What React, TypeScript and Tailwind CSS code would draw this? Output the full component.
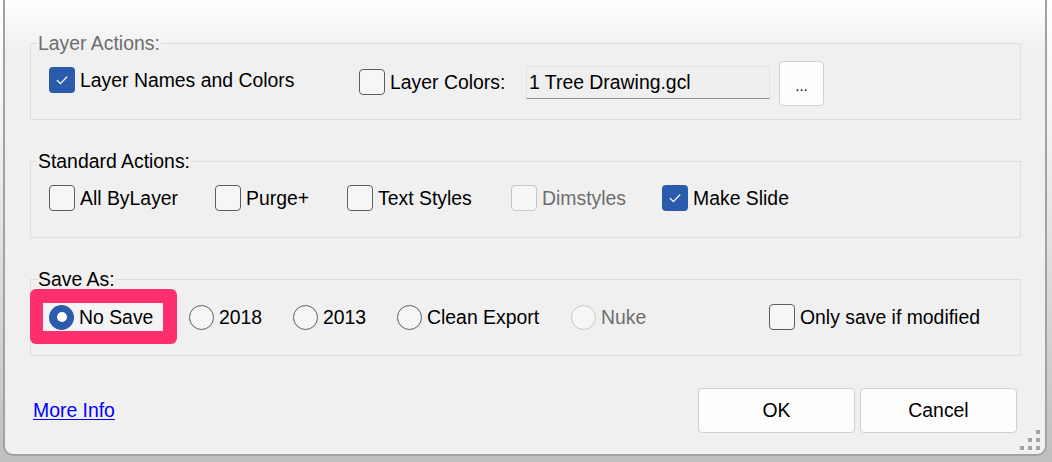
import React from 'react';

const font = { fontFamily: '"Liberation Sans", Arial, sans-serif' };

function CheckBox({ checked, disabled }: { checked?: boolean; disabled?: boolean }) {
    if (checked) {
        return (
            <span className="flex h-[26px] w-[26px] shrink-0 items-center justify-center rounded-[4px] bg-[#2a5cab]">
                <svg width="26" height="26" viewBox="0 0 26 26" fill="none">
                    <path d="M8.2 13.4 L11.4 16.6 L17.8 10" stroke="#ffffff" strokeWidth="1.3" strokeLinecap="round" strokeLinejoin="round" />
                </svg>
            </span>
        );
    }
    return (
        <span
            className={
                disabled
                    ? 'h-[26px] w-[26px] shrink-0 rounded-[4px] border-[1.5px] border-[#c6c6c6] bg-[#f7f7f7]'
                    : 'h-[26px] w-[26px] shrink-0 rounded-[4px] border-[1.5px] border-[#5e5e5e] bg-[#f6f6f6]'
            }
        />
    );
}

function Radio({ checked, disabled }: { checked?: boolean; disabled?: boolean }) {
    if (checked) {
        return (
            <span className="flex h-[25px] w-[25px] shrink-0 items-center justify-center rounded-full bg-[#2a5cab]">
                <span className="h-[10px] w-[10px] rounded-full bg-white" />
            </span>
        );
    }
    return (
        <span
            className={
                disabled
                    ? 'h-[25px] w-[25px] shrink-0 rounded-full border-[1.5px] border-[#c8c8c8] bg-[#f6f6f6]'
                    : 'h-[25px] w-[25px] shrink-0 rounded-full border-[1.5px] border-[#5e5e5e] bg-[#f6f6f6]'
            }
        />
    );
}

function Option({
    label,
    width,
    kind = 'check',
    checked,
    disabled,
}: {
    label: string;
    width?: string;
    kind?: 'check' | 'radio';
    checked?: boolean;
    disabled?: boolean;
}) {
    return (
        <div className={`flex shrink-0 items-center gap-[5px] ${width ?? ''}`}>
            {kind === 'check' ? <CheckBox checked={checked} disabled={disabled} /> : <Radio checked={checked} disabled={disabled} />}
            <span className={`text-[19.4px] leading-[26px] ${disabled ? 'text-[#6d6d6d]' : 'text-black'}`}>{label}</span>
        </div>
    );
}

function Group({ title, muted, children }: { title: string; muted?: boolean; children: React.ReactNode }) {
    return (
        <fieldset className="m-0 h-[88px] w-[991px] border border-[#dedede] p-0">
            <legend className={`ml-[6px] px-[1px] text-[19.4px] leading-[22px] ${muted ? 'text-[#6d6d6d]' : 'text-black'}`}>
                {title}
            </legend>
            {children}
        </fieldset>
    );
}

export default function App() {
    return (
        <div
            style={font}
            className="h-[462px] w-[1052px] overflow-hidden bg-[linear-gradient(to_bottom,#ffffff_0px,#f4f4f4_120px,#bfbfbf_462px)] pl-[3px]"
        >
            <div className="relative flex h-[456px] w-[1044px] flex-col rounded-b-[10px] border-x-2 border-b-2 border-[#a2a2a2] bg-[linear-gradient(to_bottom,#ffffff_0px,#f0f0f0_50px)] pl-[25px] pt-[32px]">
                <div className="flex flex-col gap-[30px]">
                    {/* Layer Actions */}
                    <Group title="Layer Actions:" muted>
                        <div className="flex items-start pl-[18px] pt-[7px]">
                            <div className="mt-[6px]">
                                <Option label="Layer Names and Colors" width="w-[310px]" checked />
                            </div>
                            <div className="mt-[8px]">
                                <Option label="Layer Colors:" width="w-[167px]" />
                            </div>
                            <div className="mt-[5px] flex h-[33px] w-[244px] items-center border border-[#e2e2e2] border-b-[#8c8c8c] bg-[#efefef] pl-[2px] text-[19.4px] text-black">
                                1 Tree Drawing.gcl
                            </div>
                            <button className="ml-[9px] flex h-[45px] w-[45px] items-end justify-center rounded-[4px] border border-[#d2d2d2] bg-[#fdfdfd] pb-[12px] text-[15px] leading-none text-black">
                                ...
                            </button>
                        </div>
                    </Group>

                    {/* Standard Actions */}
                    <Group title="Standard Actions:">
                        <div className="flex items-center pl-[18px] pt-[13px]">
                            <Option label="All ByLayer" width="w-[166px]" />
                            <Option label="Purge+" width="w-[132px]" />
                            <Option label="Text Styles" width="w-[164px]" />
                            <Option label="Dimstyles" width="w-[151px]" disabled />
                            <Option label="Make Slide" checked />
                        </div>
                    </Group>

                    {/* Save As */}
                    <Group title="Save As:">
                        <div className="flex items-center pl-[18px] pt-[14px]">
                            <div className="relative w-[140px] shrink-0">
                                <div className="absolute left-[-19px] top-[-15px] h-[55px] w-[147px] rounded-[6px] bg-[#ff2f6e] pl-[13px] pt-[14px]">
                                    <div className="h-[28px] w-[120px] bg-[#f4f4f4]" />
                                </div>
                                <div className="relative">
                                    <Option label="No Save" kind="radio" checked />
                                </div>
                            </div>
                            <Option label="2018" kind="radio" width="w-[104px]" />
                            <Option label="2013" kind="radio" width="w-[104px]" />
                            <Option label="Clean Export" kind="radio" width="w-[174px]" />
                            <Option label="Nuke" kind="radio" width="w-[198px]" disabled />
                            <Option label="Only save if modified" />
                        </div>
                    </Group>
                </div>

                {/* Footer */}
                <div className="mt-[32px] flex w-[991px] items-center justify-between pl-[3px] pr-[4px]">
                    <a href="#" className="text-[19.4px] text-[#0000ff] underline underline-offset-[2px]">
                        More Info
                    </a>
                    <div className="flex gap-[5px]">
                        <button className="h-[45px] w-[157px] rounded-[4px] border border-[#d0d0d0] bg-[#fdfdfd] text-[19.4px] text-black">
                            OK
                        </button>
                        <button className="h-[45px] w-[157px] rounded-[4px] border border-[#d0d0d0] bg-[#fdfdfd] text-[19.4px] text-black">
                            Cancel
                        </button>
                    </div>
                </div>

                {/* resize grip */}
                <svg className="absolute bottom-[3px] right-[4px]" width="21" height="21" viewBox="0 0 21 21" fill="#a3a3a3">
                    <rect x="16" y="0" width="4" height="4" />
                    <rect x="8" y="8" width="4" height="4" />
                    <rect x="16" y="8" width="4" height="4" />
                    <rect x="0" y="16" width="4" height="4" />
                    <rect x="8" y="16" width="4" height="4" />
                    <rect x="16" y="16" width="4" height="4" />
                </svg>
            </div>
        </div>
    );
}
